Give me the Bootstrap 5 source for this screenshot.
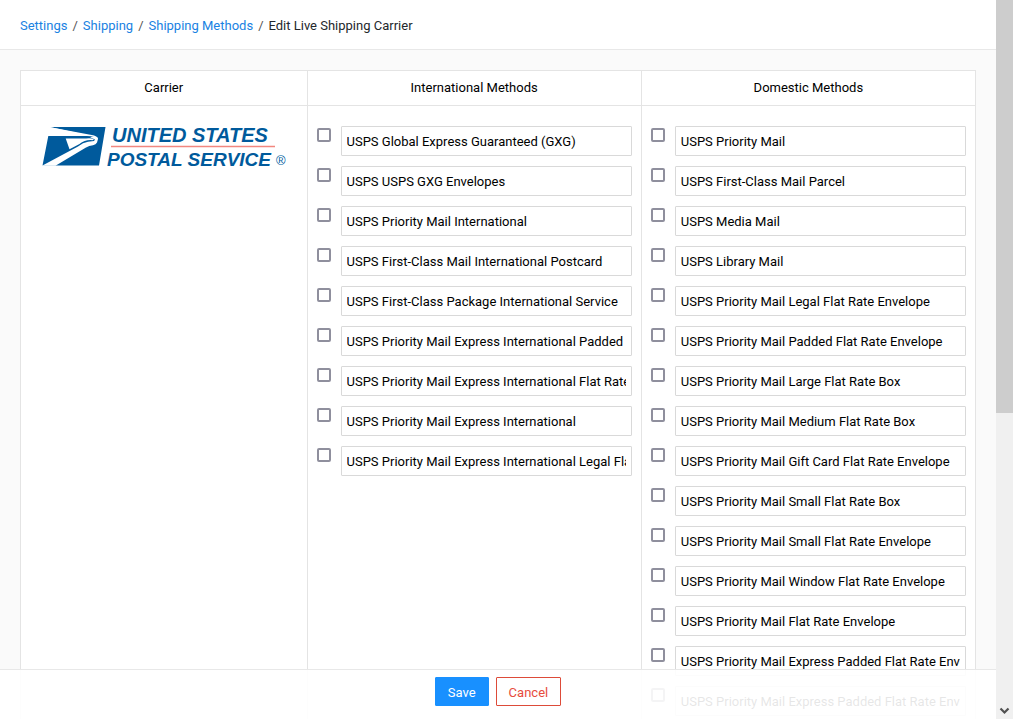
<!DOCTYPE html>
<html lang="en">
<head>
<meta charset="utf-8">
<meta name="viewport" content="width=device-width, initial-scale=1">
<title>Edit Live Shipping Carrier</title>
<link href="https://cdn.jsdelivr.net/npm/bootstrap@5.3.0/dist/css/bootstrap.min.css" rel="stylesheet">
<style>
  body { font-family: Roboto, "Liberation Sans", sans-serif; font-size: 13px; line-height: 20px; color: #000; background: #fafafa; }
  .page-head { height: 50px; border-bottom: 1px solid #e8e8e8; padding: 2px 20px 0; }
  .page-head .breadcrumb { --bs-breadcrumb-item-padding-x: 5px; --bs-breadcrumb-divider-color: #555; --bs-breadcrumb-item-active-color: #23282c; }
  .page-head a { color: #1a82e2; }
  .page-body { padding: 20px; }
  .carrier-table { table-layout: fixed; border-collapse: collapse; background: #fff; }
  .carrier-table th, .carrier-table td { border: 1px solid #e4e4e4; vertical-align: top; }
  .carrier-table th { font-weight: 400; text-align: center; padding: 8px; line-height: 18px; }
  .carrier-table .method-cell { padding: 20px 9px; }
  .carrier-table .logo-cell { padding: 16px 20px; }
  .col-carrier { width: 30%; }
  .col-methods { width: 35%; }
  .method-list { display: grid; gap: 10px; }
  .method-row { display: flex; align-items: flex-start; gap: 10px; }
  .method-row .form-check-input { width: 14px; height: 14px; margin: 2px 0 0; border: 2px solid #8f8f9d; border-radius: 2px; flex: none; }
  .method-row .form-control { height: 30px; min-width: 0; padding: 0 5px; font-size: 13px; line-height: 20px; color: #000; border: 1px solid #d9d9d9; border-radius: 1px; }
  .action-bar { height: 50px; border-top: 1px solid #e8e8e8; background: rgba(255, 255, 255, .9); padding-top: 7px; gap: 7px; }
  .action-bar .btn { height: 29px; padding: 2px 12px 0; font-size: 13px; line-height: 20px; border-radius: 1px; }
  .btn-save { --bs-btn-color: #fff; --bs-btn-bg: #1890ff; --bs-btn-border-color: #1890ff; --bs-btn-hover-color: #fff; --bs-btn-hover-bg: #0f7de0; }
  .btn-cancel { --bs-btn-color: #e74c3c; --bs-btn-bg: #fff; --bs-btn-border-color: #dd4b39; --bs-btn-hover-color: #fff; --bs-btn-hover-bg: #dd4b39; }
  .scroll-track { width: 17px; background: #f0f0f0; }
  .scroll-thumb { height: 413px; background: #cdcdcd; }
</style>
<script src="https://cdn.jsdelivr.net/npm/bootstrap@5.3.0/dist/js/bootstrap.bundle.min.js"></script>
</head>
<body>
<div class="d-flex vh-100 overflow-hidden">
  <div class="position-relative flex-grow-1 overflow-hidden">
    <header class="page-head bg-white d-flex align-items-center">
      <nav aria-label="breadcrumb">
        <ol class="breadcrumb mb-0">
          <li class="breadcrumb-item"><a class="text-decoration-none" href="#">Settings</a></li>
          <li class="breadcrumb-item"><a class="text-decoration-none" href="#">Shipping</a></li>
          <li class="breadcrumb-item"><a class="text-decoration-none" href="#">Shipping Methods</a></li>
          <li class="breadcrumb-item active" aria-current="page">Edit Live Shipping Carrier</li>
        </ol>
      </nav>
    </header>

    <main class="page-body">
      <table class="carrier-table w-100">
        <thead>
          <tr>
            <th class="col-carrier" scope="col">Carrier</th>
            <th class="col-methods" scope="col">International Methods</th>
            <th class="col-methods" scope="col">Domestic Methods</th>
          </tr>
        </thead>
        <tbody>
          <tr>
            <td class="logo-cell">
              <svg class="d-block" width="250" height="50" viewBox="0 0 250 50" role="img" aria-label="United States Postal Service">
                <path fill="#005a9c" d="M9 5H64.500L58 43.500H1.500L7.300 14H50Z"/>
                <path fill="#fff" d="M8 5L48 12.500Q54 13.200 56.500 15.500L53 15Q50 14 46 14H7Z"/>
                <path fill="#fff" d="M24.700 16.500H45Q50 15.800 53 17.200L51.500 18.200Q44 17.500 38.500 22L28.500 27.300Z"/>
                <path fill="#fff" d="M1 43.800L37 24.500Q42 20.500 47 19.800L53 19L54 17.500L49 15.300L53.500 14.600Q57.300 15 57 17L56 20.500Q55 22.500 52 23.200Q48 23.500 45 25.500L14.500 43.800Z"/>
                <g fill="#005a9c" font-family="Liberation Sans, sans-serif" font-weight="700" font-style="italic">
                  <text x="71" y="20" font-size="20">UNITED STATES</text>
                  <text x="66" y="44" font-size="19">POSTAL SERVICE</text>
                </g>
                <path stroke="#f2877f" stroke-width="1.500" d="M70 24.500H234"/>
                <text x="235" y="43" fill="#005a9c" font-family="Liberation Sans, sans-serif" font-size="13">®</text>
              </svg>
            </td>
            <td class="method-cell"><div class="method-list" id="international"></div></td>
            <td class="method-cell"><div class="method-list" id="domestic"></div></td>
          </tr>
        </tbody>
      </table>
    </main>

    <footer class="action-bar position-absolute bottom-0 start-0 w-100 d-flex justify-content-center align-items-start">
      <button type="button" class="btn btn-save">Save</button>
      <button type="button" class="btn btn-cancel">Cancel</button>
    </footer>
  </div>

  <div class="scroll-track d-flex flex-column justify-content-between flex-shrink-0" aria-hidden="true">
    <div class="scroll-thumb"></div>
    <svg width="17" height="17" viewBox="0 0 17 17"><path d="M4.500 6.500L8.500 10.500L12.500 6.500" fill="none" stroke="#505050" stroke-width="2.200"/></svg>
  </div>
</div>

<script>
  const methods = {
    international: [
      'USPS Global Express Guaranteed (GXG)',
      'USPS USPS GXG Envelopes',
      'USPS Priority Mail International',
      'USPS First-Class Mail International Postcard',
      'USPS First-Class Package International Service',
      'USPS Priority Mail Express International Padded Flat Rate Envelope',
      'USPS Priority Mail Express International Flat Rate Envelope',
      'USPS Priority Mail Express International',
      'USPS Priority Mail Express International Legal Flat Rate Envelope'
    ],
    domestic: [
      'USPS Priority Mail',
      'USPS First-Class Mail Parcel',
      'USPS Media Mail',
      'USPS Library Mail',
      'USPS Priority Mail Legal Flat Rate Envelope',
      'USPS Priority Mail Padded Flat Rate Envelope',
      'USPS Priority Mail Large Flat Rate Box',
      'USPS Priority Mail Medium Flat Rate Box',
      'USPS Priority Mail Gift Card Flat Rate Envelope',
      'USPS Priority Mail Small Flat Rate Box',
      'USPS Priority Mail Small Flat Rate Envelope',
      'USPS Priority Mail Window Flat Rate Envelope',
      'USPS Priority Mail Flat Rate Envelope',
      'USPS Priority Mail Express Padded Flat Rate Envelope',
      'USPS Priority Mail Express Padded Flat Rate Envelope'
    ]
  };
  for (const [group, names] of Object.entries(methods)) {
    const list = document.getElementById(group);
    names.forEach((name, i) => {
      const row = document.createElement('div');
      row.className = 'method-row';
      const id = group + '-' + i;
      row.innerHTML =
        `<input class="form-check-input" type="checkbox" id="${id}" aria-labelledby="${id}-name">` +
        `<input class="form-control" type="text" id="${id}-name" aria-label="${name}" value="${name}">`;
      list.append(row);
    });
  }
</script>
</body>
</html>
